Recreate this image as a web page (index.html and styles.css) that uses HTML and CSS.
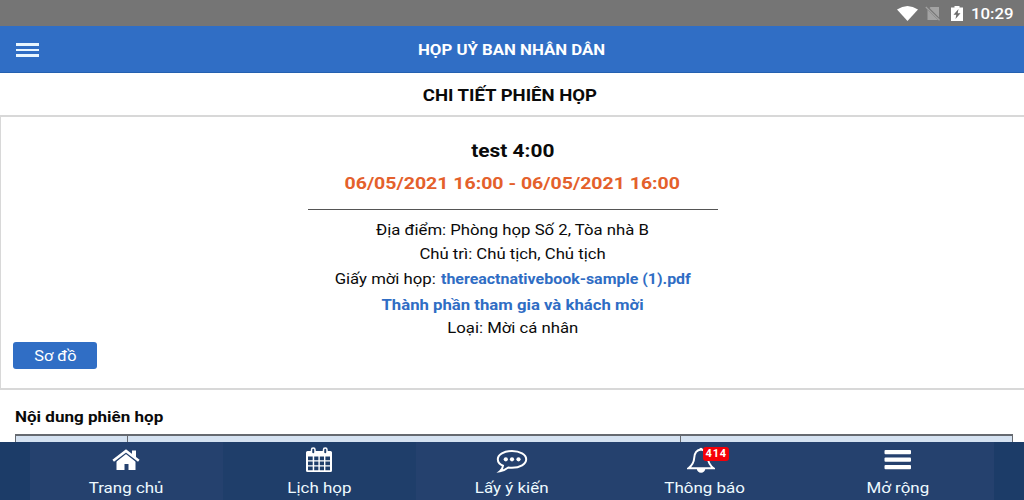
FILE: index.html
```html
<!DOCTYPE html>
<html lang="vi">
<head>
    <meta charset="UTF-8">
    <meta name="viewport" content="width=device-width, initial-scale=1.0">
    <title>Họp Uỷ Ban Nhân Dân</title>
    <link rel="stylesheet" href="styles.css">
</head>
<body>
    <div class="status-bar">
        <svg class="wifi" viewBox="0 0 21 15"><path d="M0 3.500Q10.500-3.500 21 3.500L10.500 15Z"/></svg>
        <svg class="no-sim" viewBox="0 0 16 15"><path d="M5.500 1H14v10.500L4.500 2ZM2.500 3.800 13 14H2.500Z"/><path class="slash" d="M.8 1 14.500 14.300"/></svg>
        <svg class="battery" viewBox="0 0 12 15"><path d="M3.500 0h5v1.500H12V15H0V1.500h3.500Z"/><path class="bolt" d="M7.500 3 2.500 8.800h2.800L4.500 13l5-5.800H6.700Z"/></svg>
        <span class="clock">10:29</span>
    </div>

    <header class="header">
        <button class="menu-btn" aria-label="Menu"><i></i><i></i><i></i></button>
        <h1><span>HỌP UỶ BAN NHÂN DÂN</span></h1>
    </header>

    <main>
        <h2 class="page-title"><span>CHI TIẾT PHIÊN HỌP</span></h2>

        <section class="card">
            <h3 class="name"><span>test 4:00</span></h3>
            <p class="time"><span>06/05/2021 16:00 - 06/05/2021 16:00</span></p>
            <hr>
            <p class="line"><span>Địa điểm: Phòng họp Số 2, Tòa nhà B</span></p>
            <p class="line"><span>Chủ trì: Chủ tịch, Chủ tịch</span></p>
            <p class="line invite"><span>Giấy mời họp: <a href="#">thereactnativebook-sample (1).pdf</a></span></p>
            <p class="line guests"><span><a href="#">Thành phần tham gia và khách mời</a></span></p>
            <p class="line type"><span>Loại: Mời cá nhân</span></p>
            <button class="btn"><span>Sơ đồ</span></button>
        </section>

        <h3 class="section-title"><span>Nội dung phiên họp</span></h3>
        <div class="table">
            <div></div>
            <div></div>
            <div></div>
        </div>
    </main>

    <nav class="tabs">
        <a class="tab" href="#">
            <svg class="home" viewBox="0 0 28 24"><path d="M14 5.300 23.500 13V22h-7v-6h-4v6H4.500v-9Z"/><path d="M20 2.500h4V10l-4-3.500Z"/><path class="gap" d="M2.500 14.300 14 5.300l11.500 9"/><path class="roof" d="M1.200 12.700 14 3l12.800 9.700"/></svg>
            <span>Trang chủ</span>
        </a>
        <a class="tab dark" href="#">
            <svg class="calendar" viewBox="0 0 28 26"><path fill-rule="evenodd" d="M2.500 4H25.500a1.500 1.500 0 0 1 1.500 1.500v18A1.500 1.500 0 0 1 25.500 25H2.500a1.500 1.500 0 0 1-1.500-1.500v-18A1.500 1.500 0 0 1 2.500 4ZM3 9.500v3.700h4.700V9.500ZM9.200 9.500v3.700h4.200V9.500ZM14.800 9.500v3.700h4.200V9.500ZM20.400 9.500v3.700h4.600V9.500ZM3 14.600v3.600h4.700v-3.600ZM9.200 14.600v3.600h4.200v-3.600ZM14.800 14.600v3.600h4.200v-3.600ZM20.400 14.600v3.600h4.600v-3.600ZM3 19.600v3.600h4.700v-3.600ZM9.200 19.600v3.600h4.200v-3.600ZM14.800 19.600v3.600h4.200v-3.600ZM20.400 19.600v3.600h4.600v-3.600Z"/><rect class="ring" x="6.500" y="1" width="3.500" height="6" rx="1.700"/><rect class="ring" x="18.500" y="1" width="3.500" height="6" rx="1.700"/></svg>
            <span>Lịch họp</span>
        </a>
        <a class="tab" href="#">
            <svg class="chat" viewBox="0 0 32 26"><path class="outline" d="M16 4c8 0 14.200 3.600 14.200 8.300S24 20.800 16 20.800c-1.300 0-2.500-.1-3.700-.3-2.300 1.800-4.900 3.200-8.300 3.700 1.900-1.500 2.800-3.300 3-5.500C3.700 17.400 1.800 15 1.800 12.300 1.800 7.600 8 4 16 4Z"/><circle cx="9.800" cy="12.300" r="2.100"/><circle cx="16" cy="12.300" r="2.100"/><circle cx="22.500" cy="12.300" r="2.100"/></svg>
            <span>Lấy ý kiến</span>
        </a>
        <a class="tab" href="#">
            <div class="bell-wrap">
                <svg class="bell" viewBox="0 0 28 26"><path class="outline" d="M14 2.600C9.500 3 7.500 6.500 7.200 11 6.900 16 5 18.500 1.500 21.200H26.500C23 18.500 21.300 16 20.800 11 20.400 6.500 18.500 3 14 2.600Z"/><path d="M12.300 2.500a1.700 1.700 0 0 1 3.400 0ZM9.800 21.500h8.500a4.250 4.300 0 0 1-8.500 0Z"/></svg>
                <b class="badge">414</b>
            </div>
            <span>Thông báo</span>
        </a>
        <a class="tab" href="#">
            <svg viewBox="0 0 28 24"><rect x=".5" y="2" width="26.500" height="4.200" rx="1"/><rect x=".5" y="9.500" width="26.500" height="4.200" rx="1"/><rect x=".5" y="17" width="26.500" height="4.200" rx="1"/></svg>
            <span>Mở rộng</span>
        </a>
    </nav>
</body>
</html>
```
FILE: styles.css
```css
* {
    margin: 0;
    padding: 0;
    box-sizing: border-box;
}

body {
    display: flex;
    flex-direction: column;
    height: 100vh;
    overflow: hidden;
    font-family: Roboto, sans-serif;
    font-size: 15px;
    color: #0a0a0a;
    background: #fff;
}

a {
    color: #2f6dc4;
    font-weight: 700;
    text-decoration: none;
}

button {
    border: none;
    font: inherit;
}

/* wide lettering */
span {
    display: inline-block;
    white-space: nowrap;
    transform: scaleX(1.12);
}

.status-bar {
    display: flex;
    flex: none;
    align-items: center;
    justify-content: flex-end;
    height: 26px;
    padding-right: 10px;
    background: #757575;
    color: #fff;
}

.status-bar svg {
    fill: #fff;
}

.wifi {
    width: 21px;
    height: 15px;
    margin-right: 7px;
}

.status-bar .no-sim {
    width: 16px;
    height: 15px;
    margin-right: 10px;
    fill: #a3a3a3;
}

.slash {
    stroke: #a3a3a3;
    stroke-width: 1.2;
}

.battery {
    width: 12px;
    height: 15px;
    margin-right: 8px;
}

.battery .bolt {
    fill: #6c6c6c;
}

.clock {
    width: 43px;
    padding-top: 1px;
    font-size: 15px;
    font-weight: 500;
    transform-origin: left;
}

.header {
    display: grid;
    grid-template-columns: 23px 1fr 23px;
    flex: none;
    align-items: center;
    height: 47px;
    padding: 2px 16px 0;
    background: #306ec5;
    border-bottom: 1px solid #2460b0;
    color: #fff;
}

.header h1 {
    font-size: 15px;
    font-weight: 700;
    text-align: center;
}

.menu-btn {
    display: flex;
    flex-direction: column;
    gap: 3px;
    background: none;
}

.menu-btn i {
    height: 2.500px;
    background: #e8f6ff;
}

main {
    flex: 1;
    min-height: 0;
    overflow: hidden;
}

.page-title {
    height: 42px;
    font-size: 17px;
    line-height: 44px;
    text-align: center;
}

.page-title span {
    transform: translateX(-2px) scaleX(1.09);
}

.card {
    height: 275px;
    padding-top: 21px;
    border: 2px solid #d8d8d8;
    border-width: 2px 0 2px 1px;
    text-align: center;
}

.name {
    height: 26px;
    font-size: 19px;
    line-height: 26px;
}

.name span {
    transform: scaleX(1.1);
}

.time {
    height: 38px;
    color: #e4602b;
    font-size: 17px;
    font-weight: 700;
    line-height: 38px;
}

.time span {
    transform: scaleX(1.147);
}

hr {
    width: 410px;
    margin: 7px auto 8px;
    border: none;
    border-top: 1px solid #555;
}

.line {
    height: 24px;
    line-height: 24px;
}

.line span {
    transform: scaleX(1.115);
}

.invite {
    line-height: 26px;
}

.invite a {
    margin-left: 1px;
    font-size: 14.3px;
}

.guests {
    height: 28px;
    line-height: 31px;
}

.type {
    height: 22px;
    line-height: 21px;
}

.btn {
    display: block;
    width: 84px;
    height: 27px;
    margin: 2px 0 0 12px;
    background: #306ec5;
    border-radius: 3px;
    color: #fff;
    line-height: 29px;
}

.btn span {
    transform: scaleX(1.09);
}

.section-title {
    height: 44px;
    padding-left: 15px;
    font-size: 15px;
    line-height: 54px;
}

.section-title span {
    transform: scaleX(1.135);
    transform-origin: left;
}

.table {
    display: grid;
    grid-template-columns: 111px 553px 1fr;
    height: 60px;
    margin: 0 11px 0 15px;
    border: 1px solid #666a70;
    border-top-width: 2px;
    background: #d5e2f1;
}

.table div + div {
    border-left: 1px solid #666a70;
}

.tabs {
    display: flex;
    flex: none;
    height: 58px;
    padding: 0 30px;
    background: #1c3c68;
}

.tab {
    display: flex;
    flex: 1;
    flex-direction: column;
    align-items: center;
    padding-top: 5px;
    background: #25416e;
    color: #eefaff;
    font-weight: 400;
    line-height: 22px;
}

.tab.dark {
    background: #1f3e6a;
}

.tab span {
    transform: scaleX(1.13);
}

.tab svg {
    display: block;
    height: 24px;
    margin: 1px 0 5px;
    fill: #fff;
}

.tab .calendar,
.tab .chat,
.tab .bell {
    height: 26px;
    margin: 0 0 4px;
}

.tab .roof,
.tab .outline {
    fill: none;
    stroke: #fff;
    stroke-width: 2;
}

.tab .roof {
    stroke-width: 2.6;
}

.tab .gap {
    fill: none;
    stroke: #25416e;
    stroke-width: 1.4;
}

.tab .ring {
    fill: #1f3e6a;
    stroke: #fff;
    stroke-width: 1.5;
}

.bell-wrap {
    position: relative;
    margin-right: 7px;
}

.badge {
    position: absolute;
    top: 0;
    left: 16px;
    width: 26px;
    height: 14px;
    border-radius: 3px;
    background: #f50008;
    color: #fff;
    font-size: 11px;
    line-height: 14px;
    letter-spacing: 0.8px;
    text-align: center;
}
```
